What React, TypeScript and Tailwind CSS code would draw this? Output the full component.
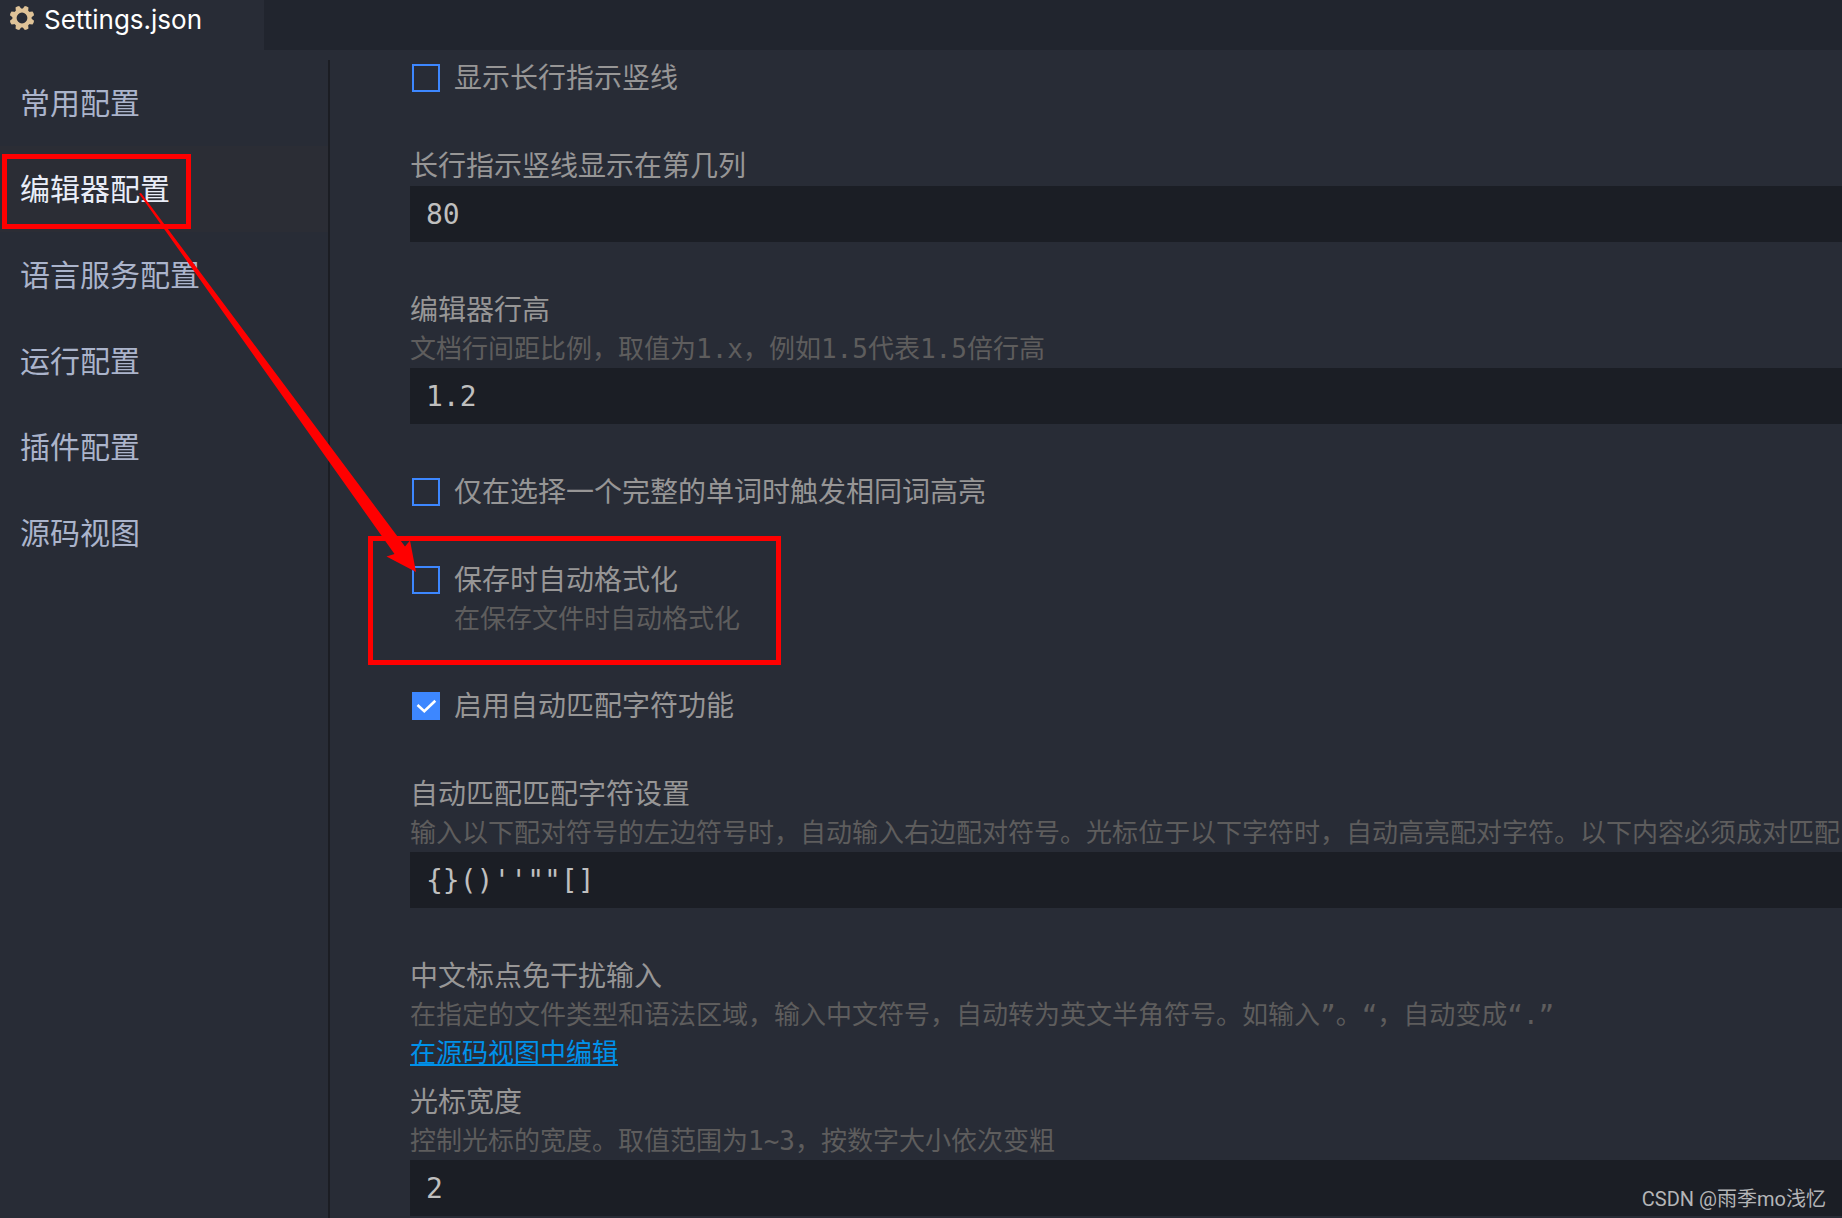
import { useState } from "react";
import type { ReactNode } from "react";

const menu = [
  "常用配置",
  "编辑器配置",
  "语言服务配置",
  "运行配置",
  "插件配置",
  "源码视图",
];

function GearIcon() {
  const teeth = [0, 45, 90, 135, 180, 225, 270, 315];

  return (
    <svg viewBox="0 0 24 24" className="size-6 overflow-visible" fill="#dfc398">
      {teeth.map((deg) => (
        <path
          key={deg}
          d="M8.8 4 10 -0.2Q12 -0.9 14 -0.2L15.2 4Z"
          transform={`rotate(${deg + 22.5} 12 12)`}
        />
      ))}
      <circle cx="12" cy="12" r="7.5" fill="none" stroke="#dfc398" strokeWidth="4.2" />
    </svg>
  );
}

function Desc({ children }: { children: ReactNode }) {
  return (
    <p className="text-[26px] leading-[38px] text-[#5e5d5d] whitespace-nowrap">
      {children}
    </p>
  );
}

type TextFieldProps = {
  id: string;
  label: string;
  desc?: string;
  value: string;
};

function TextField({ id, label, desc, value }: TextFieldProps) {
  const [text, setText] = useState(value);

  return (
    <div className="flex flex-col">
      <label htmlFor={id} className="pt-0.5 text-[28px] leading-[38px] text-[#979696]">
        {label}
      </label>
      {desc && <Desc>{desc}</Desc>}
      <input
        id={id}
        type="text"
        value={text}
        onChange={(e) => setText(e.target.value)}
        className="w-full h-14 px-4 bg-[#1b1e25] text-[28px] text-[#bfbfbf] outline-none"
      />
    </div>
  );
}

type CheckFieldProps = {
  id: string;
  label: string;
  desc?: string;
  defaultChecked?: boolean;
};

function CheckField({ id, label, desc, defaultChecked }: CheckFieldProps) {
  return (
    <div className="flex flex-col">
      <div className="flex items-center h-10 pl-0.5 gap-3.5">
        <span className="grid size-7">
          <input
            id={id}
            type="checkbox"
            defaultChecked={defaultChecked}
            className="peer appearance-none col-start-1 row-start-1 size-7 border-2 border-[#3d87ff] checked:bg-[#3d87ff]"
          />
          <svg
            viewBox="0 0 28 28"
            className="col-start-1 row-start-1 size-7 pointer-events-none hidden peer-checked:block"
            fill="none"
            stroke="#fff"
            strokeWidth="2.6"
          >
            <path d="M5.5 13 12.3 19.2 23.3 8.7" />
          </svg>
        </span>
        <label htmlFor={id} className="pt-0.5 text-[28px] leading-[38px] text-[#979696]">
          {label}
        </label>
      </div>
      {desc && (
        <div className="pl-11">
          <Desc>{desc}</Desc>
        </div>
      )}
    </div>
  );
}

function Sidebar() {
  const [active, setActive] = useState("编辑器配置");

  return (
    <nav className="w-[330px] shrink-0 mt-2.5 border-r-2 border-[#1b1d23]">
      {menu.map((item) => (
        <button
          key={item}
          type="button"
          onClick={() => setActive(item)}
          className={
            item === active
              ? "block w-full h-[86px] pl-5 text-left text-[30px] bg-[#2b2d35] text-[#e9edf8]"
              : "block w-full h-[86px] pl-5 text-left text-[30px] text-[#abb4cb]"
          }
        >
          {item}
        </button>
      ))}
    </nav>
  );
}

function Annotations() {
  return (
    <div className="absolute inset-0 pointer-events-none">
      <div className="absolute left-0.5 top-[154px] w-[189px] h-[75px] border-5 border-[#ff0000]" />
      <div className="absolute left-[368px] top-[536px] w-[413px] h-[129px] border-5 border-[#ff0000]" />
      <svg
        className="absolute left-0 top-0 w-[430px] h-[580px]"
        viewBox="0 0 430 580"
        fill="#ff0000"
      >
        <path d="M139 193.5 141 193 405 546.5 410 540.5 416 572 386.5 556.5 394.5 554Z" />
      </svg>
      <span className="absolute right-4 bottom-[5px] text-[20px] leading-7 text-[#b4b5b7] font-['Roboto','Noto_Sans_CJK_SC',sans-serif]">
        CSDN @雨季mo浅忆
      </span>
    </div>
  );
}

export default function App() {
  return (
    <div className="relative min-h-screen flex flex-col overflow-hidden bg-[#282c36] font-['DejaVu_Sans_Mono','Noto_Sans_CJK_SC',monospace]">
      <header className="flex h-[50px] bg-[#21252e]">
        <div className="flex items-start w-[264px] pl-2.5 pt-1.5 gap-2.5 bg-[#282c36]">
          <GearIcon />
          <span className="text-[26px] leading-7 text-white font-['Inter',sans-serif]">
            Settings.json
          </span>
        </div>
      </header>
      <div className="flex flex-1">
        <Sidebar />
        <main className="flex flex-col flex-1 min-w-0 gap-12 pt-2 pl-20">
          <CheckField id="ruler" label="显示长行指示竖线" />
          <TextField id="ruler-column" label="长行指示竖线显示在第几列" value="80" />
          <TextField
            id="line-height"
            label="编辑器行高"
            desc="文档行间距比例，取值为1.x，例如1.5代表1.5倍行高"
            value="1.2"
          />
          <CheckField id="highlight" label="仅在选择一个完整的单词时触发相同词高亮" />
          <CheckField
            id="format-on-save"
            label="保存时自动格式化"
            desc="在保存文件时自动格式化"
          />
          <CheckField id="auto-pair" label="启用自动匹配字符功能" defaultChecked />
          <TextField
            id="pairs"
            label="自动匹配匹配字符设置"
            desc="输入以下配对符号的左边符号时，自动输入右边配对符号。光标位于以下字符时，自动高亮配对字符。以下内容必须成对匹配"
            value={`{}()''""[]`}
          />
          <div className="flex flex-col gap-2.5">
            <div>
              <h3 className="pt-0.5 text-[28px] leading-[38px] text-[#979696]">
                中文标点免干扰输入
              </h3>
              <Desc>
                在指定的文件类型和语法区域，输入中文符号，自动转为英文半角符号。如输入”。“，自动变成“.”
              </Desc>
              <a
                href="#source"
                className="block w-fit text-[26px] leading-[38px] text-[#0091ea] underline"
              >
                在源码视图中编辑
              </a>
            </div>
            <TextField
              id="cursor-width"
              label="光标宽度"
              desc="控制光标的宽度。取值范围为1~3，按数字大小依次变粗"
              value="2"
            />
          </div>
        </main>
      </div>
      <Annotations />
    </div>
  );
}
